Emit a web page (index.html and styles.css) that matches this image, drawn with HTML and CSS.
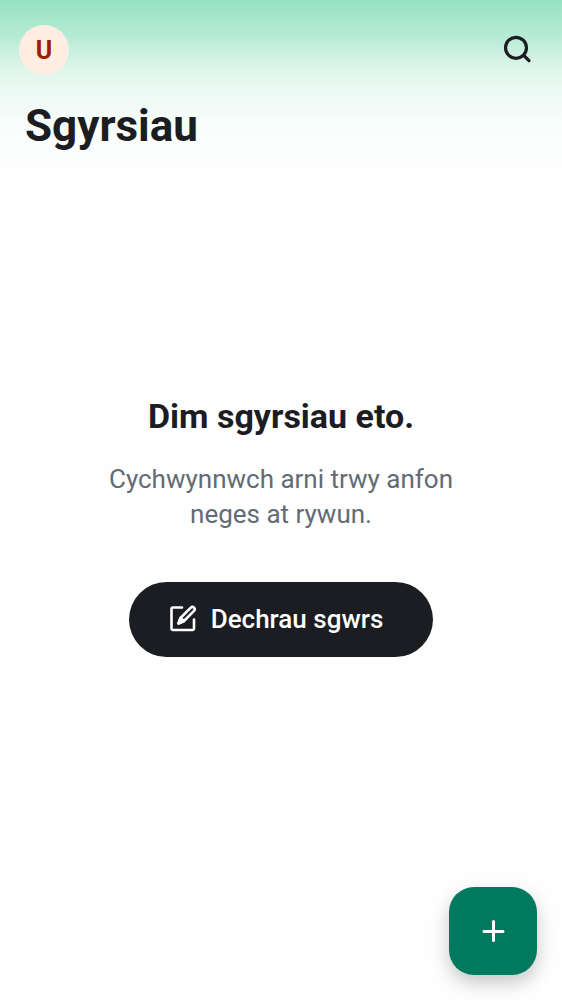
FILE: index.html
```html
<!DOCTYPE html>
<html lang="cy">
<head>
<meta charset="utf-8">
<meta name="viewport" content="width=device-width, initial-scale=1">
<title>Sgyrsiau</title>
<link rel="stylesheet" href="styles.css">
</head>
<body>
<div class="app">
  <header class="header">
    <div class="toolbar">
      <button class="avatar" type="button">U</button>
      <button class="icon-button" type="button" aria-label="Chwilio">
        <svg class="icon" viewBox="0 0 32 32" fill="none" stroke="currentColor" stroke-width="3.2" stroke-linecap="round">
          <circle cx="15" cy="13.800" r="10.500"/><path d="M22.800 21.500l5.200 5.200"/>
        </svg>
      </button>
    </div>
    <h1 class="title">Sgyrsiau</h1>
  </header>
  <main class="empty">
    <h2 class="empty-title">Dim sgyrsiau eto.</h2>
    <p class="empty-text">Cychwynnwch arni trwy anfon neges at rywun.</p>
    <button class="start" type="button">
      <svg class="start-icon" viewBox="0 0 28 28" fill="none" stroke="currentColor" stroke-width="2.6" stroke-linecap="round" stroke-linejoin="round">
        <path d="M13 2.500H4a1.500 1.500 0 0 0-1.500 1.500V23.500a1.500 1.500 0 0 0 1.500 1.500H23.500a1.500 1.500 0 0 0 1.500-1.500V14.500"/>
        <path d="M9.500 18.500l2-5.500L21.800 2.700a2.200 2.200 0 0 1 3.200 3.200L15 16z"/>
        <path d="M9.500 18.500l2-5.500 3.500 3z" fill="currentColor"/>
      </svg>
      <span>Dechrau sgwrs</span>
    </button>
  </main>
  <button class="fab" type="button" aria-label="Sgwrs newydd">
    <svg class="fab-icon" viewBox="0 0 24 24" fill="none" stroke="currentColor" stroke-width="3" stroke-linecap="round">
      <path d="M12.500 2.500v19M3 12.500h19"/>
    </svg>
  </button>
</div>
</body>
</html>
```
FILE: styles.css
```css
* { box-sizing: border-box; }
body { margin: 0; font-family: Roboto, sans-serif; color: #1b1d22; background: #fefefe; }
button { border: 0; padding: 0; font: inherit; cursor: pointer; }
.app { min-height: 100vh; display: flex; flex-direction: column; }
.header { padding: 25px 25px 20px; background: linear-gradient(#96e2c2 0%, #b4ead3 20%, #dbf5e9 38%, #ebf9f3 52%, #f8fdfb 72%, #fefefe 100%); }
.toolbar { display: flex; justify-content: space-between; align-items: center; margin-left: -6px; }
.avatar { width: 50px; height: 50px; border-radius: 50%; background: #ffede3; color: #9b2000; font-size: 25px; font-weight: 700; }
.icon-button { width: 40px; height: 40px; display: grid; place-items: center; background: none; color: #1b1d22; }
.icon { width: 32px; height: 32px; }
.title { margin: 25px 0 0; font-size: 44px; line-height: 52px; font-weight: 700; }
.empty { flex: 1; display: flex; flex-direction: column; align-items: center; justify-content: center; padding: 0 100px 122px; text-align: center; }
.empty-title { margin: 0; font-size: 34px; line-height: 44px; font-weight: 700; }
.empty-text { margin: 24px 0 50px; font-size: 26px; line-height: 35px; color: #636b74; }
.start { display: flex; align-items: center; gap: 14px; padding: 0 50px 0 40px; height: 75px; border-radius: 38px; background: #1b1d22; color: #fff; font-size: 26px; font-weight: 500; }
.start-icon { width: 28px; height: 28px; }
.fab { position: fixed; right: 25px; bottom: 25px; width: 88px; height: 88px; border-radius: 25px; display: grid; place-items: center; background: #007a5e; color: #fff; box-shadow: 0 8px 18px rgba(0,0,0,.22); }
.fab-icon { width: 24px; height: 24px; }
```
